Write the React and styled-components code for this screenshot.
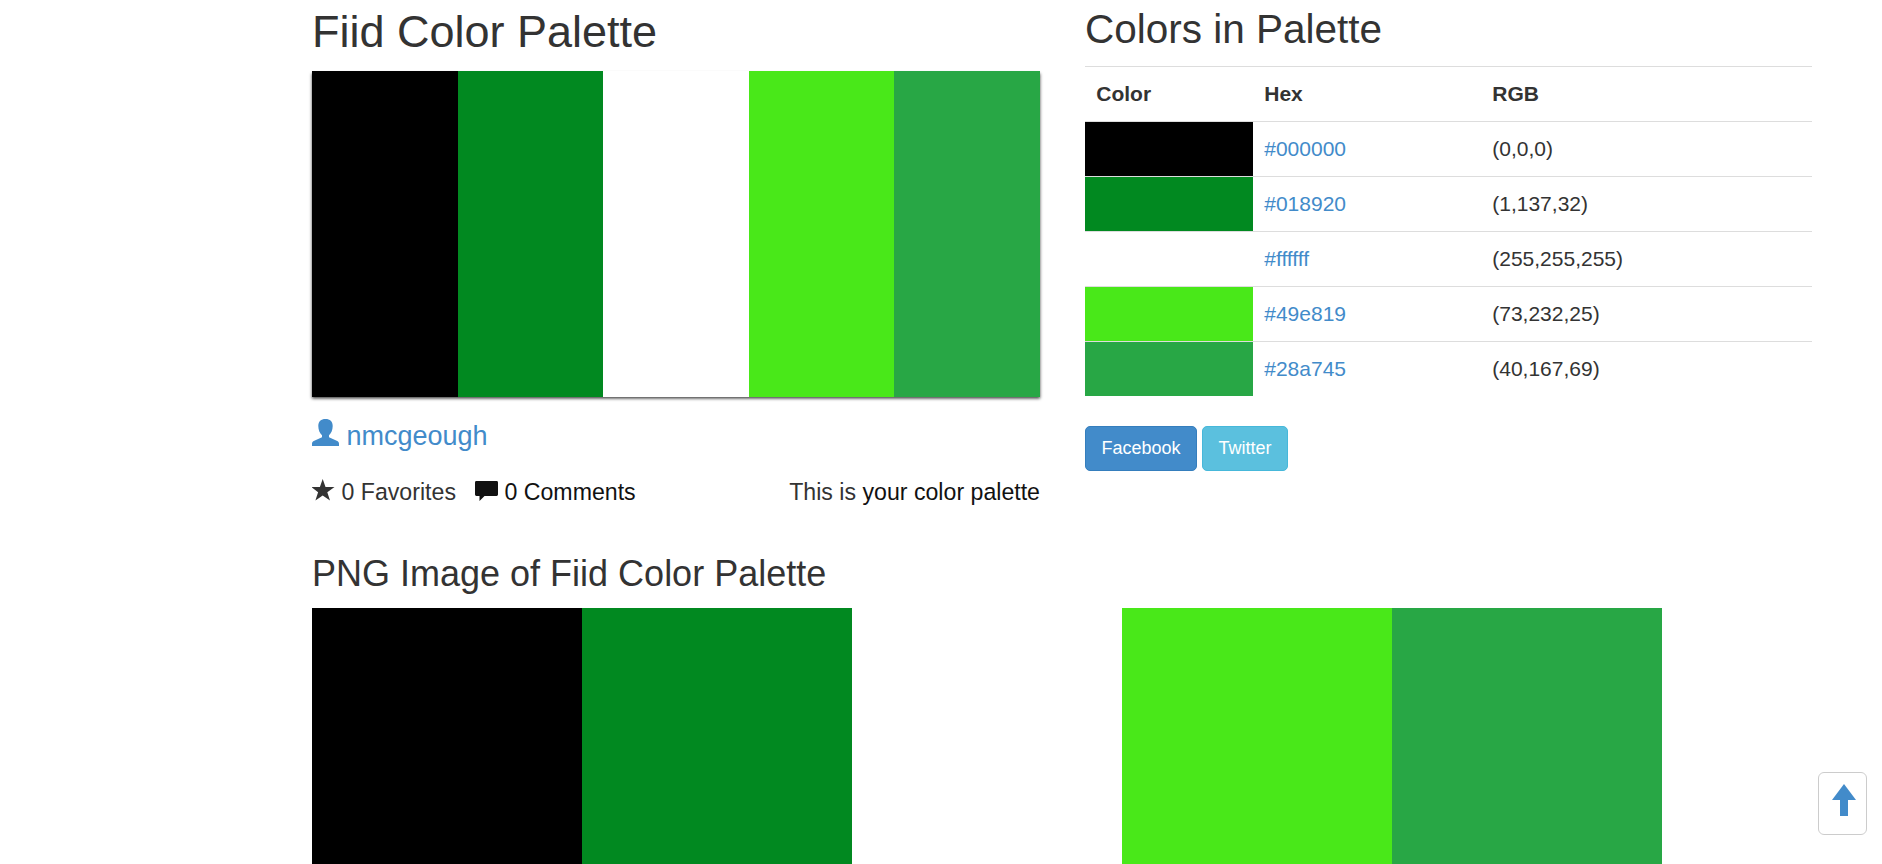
import React from "react";
import styled, { createGlobalStyle } from "styled-components";

const GlobalStyle = createGlobalStyle`
  *, *::before, *::after { box-sizing: border-box; }
  body {
    margin: 0;
    overflow: hidden;
    background: #fff;
    color: #333;
    font-family: "Liberation Sans", Arial, sans-serif;
    font-size: 21px;
    line-height: 30px;
  }
`;

const Page = styled.main`
  height: 864px;
  overflow: hidden;
  padding-left: 312px;
`;

const Columns = styled.div`
  display: flex;
  gap: 45px;
  height: 552px;
`;

const PaletteColumn = styled.section`
  width: 728px;
`;

const DetailsColumn = styled.section`
  width: 727px;
`;

const Title = styled.h1`
  margin: 0;
  padding-top: 7px;
  height: 71px;
  font-size: 45px;
  line-height: 50px;
  font-weight: 400;
`;

const TableTitle = styled.h2`
  margin: 0;
  padding-top: 6px;
  height: 66px;
  font-size: 40.5px;
  line-height: 46px;
  font-weight: 400;
`;

const ImageTitle = styled.h2`
  margin: 0;
  height: 56px;
  font-size: 36px;
  line-height: 44px;
  font-weight: 400;
`;

const Swatches = styled.div`
  display: flex;
  height: 326px;
  box-shadow: 0 1.5px 3px rgba(0, 0, 0, 0.75);
`;

const Swatch = styled.div`
  flex: 1;
  background: ${(p) => p.$color};
`;

const Author = styled.a`
  display: flex;
  align-items: flex-start;
  gap: 7.5px;
  margin-top: 21px;
  height: 53px;
  color: #428bca;
  font-size: 27px;
  line-height: 36px;
  text-decoration: none;

  svg { margin-top: 1px; }
`;

const Meta = styled.div`
  display: flex;
  height: 40px;
  padding-top: 5px;
  font-size: 23.15px;
  line-height: 32px;
`;

const Stat = styled.span`
  display: flex;
  align-items: flex-start;
  gap: 6.5px;
  margin-right: 19px;
  color: ${(p) => (p.$dark ? "#111" : "#333")};

  svg { margin-top: ${(p) => p.$iconTop}; }
`;

const Description = styled.span`
  margin-left: auto;
`;

const Dark = styled.span`
  color: #111;
`;

const Table = styled.table`
  width: 100%;
  border-collapse: separate;
  border-spacing: 0;
  table-layout: fixed;
`;

const HeadCell = styled.th`
  width: ${(p) => p.$width};
  height: 55px;
  padding: 0 11.25px;
  border-top: 1px solid #ddd;
  text-align: left;
  font-weight: 700;
`;

const Cell = styled.td`
  height: 55px;
  padding: 0 11.25px;
  border-top: 1px solid #ddd;
  background: ${(p) => p.$color || "transparent"};
  background-clip: padding-box;
`;

const HexLink = styled.a`
  color: #428bca;
  text-decoration: none;
`;

const Buttons = styled.div`
  display: flex;
  gap: 5px;
  margin-top: 30px;
`;

const ShareButton = styled.button`
  width: ${(p) => p.$width};
  height: 45px;
  padding: 0 0 2px;
  border: 1px solid ${(p) => p.$border};
  border-radius: 5px;
  background: ${(p) => p.$background};
  color: #fff;
  font: 18px/26px "Liberation Sans", Arial, sans-serif;
`;

const PngImage = styled.div`
  display: flex;
  width: 1350px;
  height: 675px;
`;

const BackToTop = styled.a`
  position: fixed;
  right: 15px;
  bottom: 29px;
  display: flex;
  justify-content: flex-start;
  width: 49px;
  height: 63px;
  padding: 11px 0 0 13px;
  border: 1px solid #ccc;
  border-radius: 6px;
  background: #fff;
`;

const colors = [
  { hex: "#000000", rgb: "(0,0,0)" },
  { hex: "#018920", rgb: "(1,137,32)" },
  { hex: "#ffffff", rgb: "(255,255,255)" },
  { hex: "#49e819", rgb: "(73,232,25)" },
  { hex: "#28a745", rgb: "(40,167,69)" },
];

const UserIcon = () => (
  <svg width="27" height="27" viewBox="0 0 27 27" fill="#428bca">
    <path d="M13.500 0C9 0 6.300 2.600 6.300 7c0 4 1.500 7.300 3.700 9.200v2L2.300 21.700C.7 22.400 0 23.400 0 24.800V27h27v-2.200c0-1.400-.7-2.400-2.300-3.100L17 18.200v-2c2.200-1.900 3.700-5.200 3.700-9.200 0-4.400-2.700-7-7.200-7z" />
  </svg>
);

const StarIcon = () => (
  <svg width="23" height="22" viewBox="0 0 23 22" fill="#333">
    <path d="M10.700 0l2.800 8h9l-7.200 5.300 2.700 8.200-7.300-5.100-7.300 5.100 2.700-8.200L-.7 8h8.600z" />
  </svg>
);

const CommentIcon = () => (
  <svg width="23" height="20" viewBox="0 0 23 20" fill="#111">
    <path d="M1.400 0h20.200Q23 0 23 1.400v12.200q0 1.400-1.400 1.400H9.500l-5 5v-5H1.400Q0 15 0 13.600V1.400Q0 0 1.400 0z" />
  </svg>
);

const ArrowIcon = () => (
  <svg width="24" height="32" viewBox="0 0 24 32" fill="#428bca">
    <path d="M12 0l12 16h-8v16H8V16H0z" />
  </svg>
);

export default function App() {
  return (
    <>
      <GlobalStyle />
      <Page>
        <Columns>
          <PaletteColumn>
            <Title>Fiid Color Palette</Title>
            <Swatches>
              {colors.map((c) => <Swatch key={c.hex} $color={c.hex} />)}
            </Swatches>
            <Author>
              <UserIcon />
              <span>nmcgeough</span>
            </Author>
            <Meta>
              <Stat $iconTop="3px">
                <StarIcon />
                <span>0 Favorites</span>
              </Stat>
              <Stat $dark $iconTop="5px">
                <CommentIcon />
                <span>0 Comments</span>
              </Stat>
              <Description>This is <Dark>your color palette</Dark></Description>
            </Meta>
          </PaletteColumn>
          <DetailsColumn>
            <TableTitle>Colors in Palette</TableTitle>
            <Table>
              <thead>
                <tr>
                  <HeadCell $width="168px">Color</HeadCell>
                  <HeadCell $width="228px">Hex</HeadCell>
                  <HeadCell>RGB</HeadCell>
                </tr>
              </thead>
              <tbody>
                {colors.map((c) => (
                  <tr key={c.hex}>
                    <Cell $color={c.hex} />
                    <Cell><HexLink>{c.hex}</HexLink></Cell>
                    <Cell>{c.rgb}</Cell>
                  </tr>
                ))}
              </tbody>
            </Table>
            <Buttons>
              <ShareButton $width="112px" $background="#428bca" $border="#357ebd">Facebook</ShareButton>
              <ShareButton $width="86px" $background="#5bc0de" $border="#46b8da">Twitter</ShareButton>
            </Buttons>
          </DetailsColumn>
        </Columns>
        <ImageTitle>PNG Image of Fiid Color Palette</ImageTitle>
        <PngImage>
          {colors.map((c) => <Swatch key={c.hex} $color={c.hex} />)}
        </PngImage>
      </Page>
      <BackToTop><ArrowIcon /></BackToTop>
    </>
  );
}
